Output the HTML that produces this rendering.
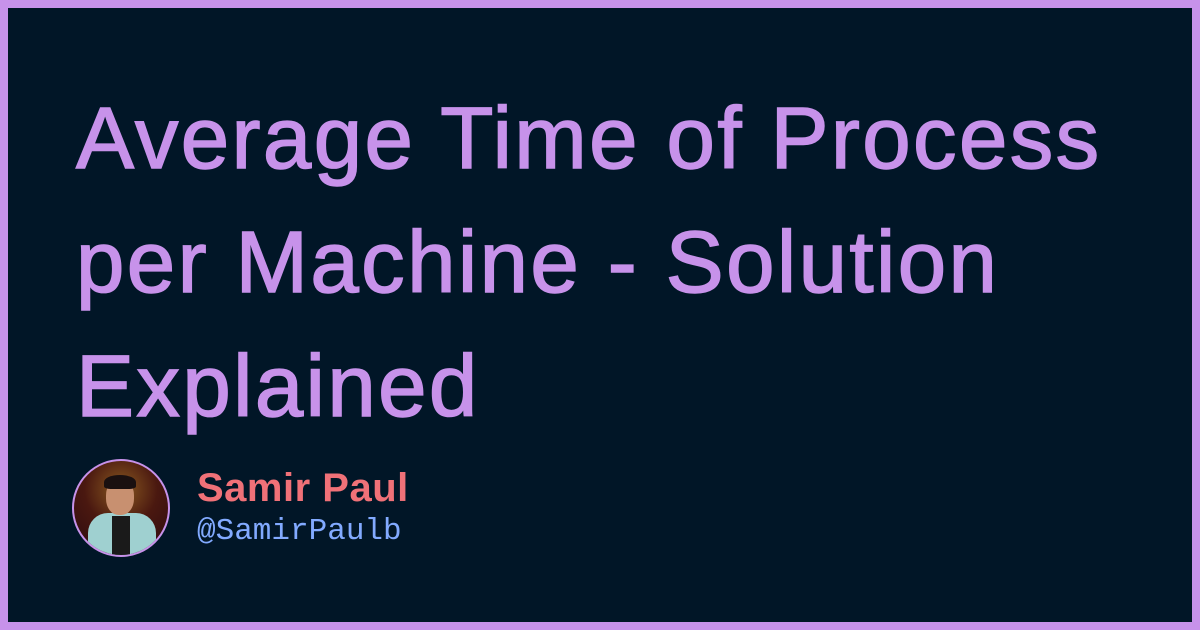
<!DOCTYPE html>
<html><head><meta charset="utf-8"><style>
html,body{margin:0;padding:0}
body{width:1200px;height:630px;box-sizing:border-box;border:8px solid #c792ea;background:#011627;position:relative;overflow:hidden;font-family:"Liberation Sans",sans-serif}
.t{position:absolute;left:68px;top:69px;color:#c792ea;font-size:87px;line-height:124px;font-weight:normal;-webkit-text-stroke:1.5px #c792ea;letter-spacing:2.4px}
.t div{white-space:nowrap}
.av{position:absolute;left:64px;top:451px;width:94px;height:94px;border-radius:50%;border:2px solid #c792ea;overflow:hidden;background:radial-gradient(circle at 50% 30%,#8a5a20 0,#4a1810 45%,#2a0a10 100%)}
.av .b{position:absolute;left:14px;top:52px;width:68px;height:50px;background:#9fd0d0;border-radius:20px 20px 0 0}
.av .s{position:absolute;left:38px;top:55px;width:18px;height:45px;background:#1a1a1a}
.av .h{position:absolute;left:32px;top:18px;width:28px;height:36px;background:#c89070;border-radius:45%}
.av .hr{position:absolute;left:30px;top:14px;width:32px;height:14px;background:#1a1010;border-radius:50% 50% 20% 20%}
.n{position:absolute;left:189px;top:458px;color:#f07178;font-size:40px;font-weight:bold;letter-spacing:0.5px}
.u{position:absolute;left:189px;top:506px;color:#82aaff;font-family:"Liberation Mono",monospace;font-size:31px}
</style></head><body>
<div class="t"><div>Average Time of Process</div><div>per Machine - Solution</div><div>Explained</div></div>
<div class="av"><div class="b"></div><div class="s"></div><div class="h"></div><div class="hr"></div></div>
<div class="n">Samir Paul</div>
<div class="u">@SamirPaulb</div>
</body></html>
